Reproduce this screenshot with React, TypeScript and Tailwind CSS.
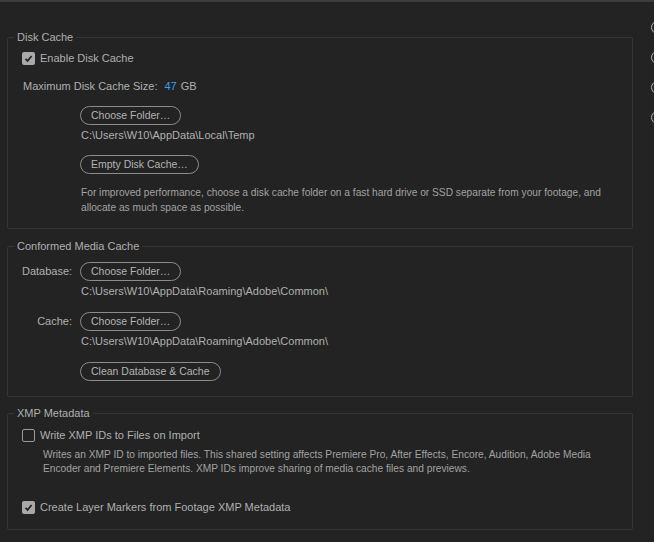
import React from 'react';

const font = { fontFamily: '"Liberation Sans", Arial, sans-serif' };

const Checkbox = ({ checked }: { checked: boolean }) =>
    checked ? (
        <span className="w-[13px] h-[13px] rounded-[2px] bg-[#a9a9a9] flex items-center justify-center shrink-0">
            <svg width="9" height="9" viewBox="0 0 9 9">
                <path d="M1.5 4.8 L3.6 6.9 L7.6 2" stroke="#232323" strokeWidth="1.7" fill="none" />
            </svg>
        </span>
    ) : (
        <span className="w-[13px] h-[13px] rounded-[2px] border border-[#9a9a9a] shrink-0" />
    );

const PillButton = ({ children }: { children: React.ReactNode }) => (
    <button
        type="button"
        className="h-[19px] px-[10px] rounded-full border border-[#8c8c8c] text-[10.5px] leading-none text-[#b4b4b4] whitespace-nowrap"
    >
        {children}
    </button>
);

const Group = ({ title, className, children }: { title: string; className?: string; children: React.ReactNode }) => (
    <fieldset className={`border border-[#363636] rounded-[2px] w-[626px] ${className ?? ''}`}>
        <legend className="ml-[6px] px-[3px] text-[11px] leading-[14px] text-[#b0b0b0]">{title}</legend>
        <div className="pl-[14px]">{children}</div>
    </fieldset>
);

export default function App() {
    return (
        <div
            className="w-[654px] h-[542px] bg-[#232323] border-t-2 border-[#3c3c3c] overflow-hidden flex text-[#b0b0b0]"
            style={font}
        >
            <div className="flex flex-col pl-[7px] pt-[28px] text-[11px]">
                {/* Disk Cache */}
                <Group title="Disk Cache" className="pb-[13px]">
                    <label className="flex items-center gap-[5px] h-[16px] mt-[6px]">
                        <Checkbox checked />
                        <span>Enable Disk Cache</span>
                    </label>
                    <div className="flex items-center h-[16px] mt-[12px] pl-[1px]">
                        <span>Maximum Disk Cache Size:</span>
                        <span className="ml-[7px] text-[#3b9cf2]">47</span>
                        <span className="ml-[4px]">GB</span>
                    </div>
                    <div className="pl-[58px] flex flex-col items-start">
                        <div className="mt-[12px]">
                            <PillButton>Choose Folder…</PillButton>
                        </div>
                        <div className="mt-[3px] h-[14px] leading-[14px] pl-[1px]">C:\Users\W10\AppData\Local\Temp</div>
                        <div className="mt-[13px]">
                            <PillButton>Empty Disk Cache…</PillButton>
                        </div>
                        <p className="mt-[11px] pl-[1px] text-[10.2px] leading-[15px] text-[#a2a2a2] w-[540px]">
                            For improved performance, choose a disk cache folder on a fast hard drive or SSD separate from your footage, and allocate as much space as possible.
                        </p>
                    </div>
                </Group>

                {/* Conformed Media Cache */}
                <Group title="Conformed Media Cache" className="mt-[10px] pb-[15px]">
                    <div className="flex items-center mt-[9px]">
                        <span className="w-[51px] text-right pr-[1px]">Database:</span>
                        <span className="ml-[7px]">
                            <PillButton>Choose Folder…</PillButton>
                        </span>
                    </div>
                    <div className="mt-[3px] h-[14px] leading-[14px] pl-[59px]">C:\Users\W10\AppData\Roaming\Adobe\Common\</div>
                    <div className="flex items-center mt-[14px]">
                        <span className="w-[51px] text-right pr-[1px]">Cache:</span>
                        <span className="ml-[7px]">
                            <PillButton>Choose Folder…</PillButton>
                        </span>
                    </div>
                    <div className="mt-[3px] h-[14px] leading-[14px] pl-[59px]">C:\Users\W10\AppData\Roaming\Adobe\Common\</div>
                    <div className="mt-[14px] pl-[58px]">
                        <PillButton>Clean Database &amp; Cache</PillButton>
                    </div>
                </Group>

                {/* XMP Metadata */}
                <Group title="XMP Metadata" className="mt-[9px] pb-[14px]">
                    <label className="flex items-center gap-[5px] h-[16px] mt-[7px]">
                        <Checkbox checked={false} />
                        <span>Write XMP IDs to Files on Import</span>
                    </label>
                    <p className="mt-[5px] pl-[21px] text-[10.2px] leading-[14px] text-[#a2a2a2] w-[580px]">
                        Writes an XMP ID to imported files. This shared setting affects Premiere Pro, After Effects, Encore, Audition, Adobe Media Encoder and Premiere Elements. XMP IDs improve sharing of media cache files and previews.
                    </p>
                    <label className="flex items-center gap-[5px] h-[16px] mt-[23px]">
                        <Checkbox checked />
                        <span>Create Layer Markers from Footage XMP Metadata</span>
                    </label>
                </Group>
            </div>

            {/* clipped radio column at the right edge */}
            <div className="flex flex-col ml-[18px] pt-[19px] gap-[17px]">
                {[0, 1, 2, 3].map((i) => (
                    <span key={i} className="w-[13px] h-[13px] rounded-full border border-[#b8b8b8] shrink-0" />
                ))}
            </div>
        </div>
    );
}
